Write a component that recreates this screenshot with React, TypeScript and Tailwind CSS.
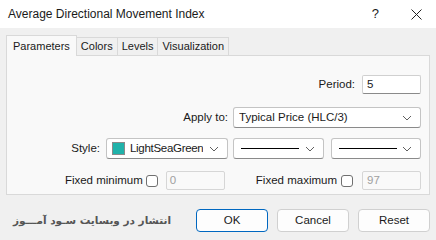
import React from "react";

const Chevron = () => (
  <svg width="10" height="6" viewBox="0 0 10 6" className="shrink-0">
    <path d="M1 1 L5 5 L9 1" fill="none" stroke="#606060" strokeWidth="1" />
  </svg>
);

const Select = ({ className, children }: { className: string; children: React.ReactNode }) => (
  <div
    className={`flex items-center justify-between h-[21px] bg-white border border-[#c4c4c4] border-b-[#8a8a8a] rounded-[3px] pl-[5px] pr-[8px] ${className}`}
  >
    <div className="flex items-center gap-[5px] min-w-0 whitespace-nowrap overflow-hidden">{children}</div>
    <Chevron />
  </div>
);

const Checkbox = () => (
  <div className="w-[12px] h-[12px] border border-[#707070] rounded-[3px] bg-white shrink-0" />
);

const App = () => {
  const tabs = ["Parameters", "Colors", "Levels", "Visualization"];

  return (
    <div
      className="w-[436px] h-[240px] bg-[#f0f0f0] text-[11.5px] text-[#1a1a1a] flex flex-col overflow-hidden"
      style={{ fontFamily: '"Liberation Sans", Arial, sans-serif' }}
    >
      {/* title bar */}
      <div className="h-[28px] bg-white flex items-center justify-between pl-[8px] pr-[14px] shrink-0">
        <span className="text-[12px]">Average Directional Movement Index</span>
        <div className="flex items-center gap-[32px]">
          <span className="text-[13px]">?</span>
          <svg width="11" height="11" viewBox="0 0 11 11">
            <path d="M0.5 0.5 L10.5 10.5 M10.5 0.5 L0.5 10.5" stroke="#222" strokeWidth="1" />
          </svg>
        </div>
      </div>

      {/* tabs */}
      <div className="px-[6px] pt-[7px] flex flex-col">
        <div className="flex items-end h-[20px] text-[11px]">
          {tabs.map((t, i) => (
            <div
              key={t}
              className={
                i === 0
                  ? "h-[21px] px-[6px] flex items-center bg-[#f9f9f9] border border-[#d9d9d9] border-b-0 relative z-10 -mb-px"
                  : "h-[18px] px-[4px] flex items-center bg-[#f0f0f0] border border-[#d9d9d9] border-l-0 border-b-0"
              }
            >
              {t}
            </div>
          ))}
        </div>
        <div className="h-[140px] bg-[#f9f9f9] border border-[#d9d9d9] flex flex-col pr-[8px]">
          <div className="flex items-center justify-end gap-[7px] mt-[19px]">
            <span>Period:</span>
            <div className="w-[59px] h-[19px] bg-white border border-[#d0d0d0] border-b-[#8a8a8a] rounded-[2px] px-[4px] flex items-center">
              5
            </div>
          </div>
          <div className="flex items-center justify-end gap-[5px] mt-[13px]">
            <span>Apply to:</span>
            <Select className="w-[188px]">
              <span>Typical Price (HLC/3)</span>
            </Select>
          </div>
          <div className="flex items-center justify-end mt-[10px]">
            <span className="mr-[6px]">Style:</span>
            <Select className="w-[122px] mr-[5px]">
              <div className="w-[13px] h-[13px] bg-[#20b2aa] border border-[#8a8a8a] shrink-0" />
              <span className="tracking-[-0.3px]">LightSeaGreen</span>
            </Select>
            <Select className="w-[91px] mr-[7px]">
              <div className="w-[58px] h-px bg-black ml-[2px]" />
            </Select>
            <Select className="w-[90px]">
              <div className="w-[58px] h-px bg-black ml-[2px]" />
            </Select>
          </div>
          <div className="flex items-center justify-end mt-[12px]">
            <span className="mr-[3px]">Fixed minimum</span>
            <Checkbox />
            <div className="w-[59px] h-[19px] ml-[8px] border border-[#d6d6d6] rounded-[2px] px-[3px] flex items-center text-[#a0a0a0]">
              0
            </div>
            <span className="ml-[31px] mr-[4px]">Fixed maximum</span>
            <Checkbox />
            <div className="w-[59px] h-[19px] ml-[9px] border border-[#d6d6d6] rounded-[2px] px-[4px] flex items-center text-[#a0a0a0]">
              97
            </div>
          </div>
        </div>
      </div>

      {/* bottom */}
      <div className="flex items-center mt-[14px] pl-[13px] pr-[6px]">
        <span
          dir="rtl"
          className="text-[10.5px] font-bold text-[#555555] whitespace-nowrap"
          style={{ fontFamily: '"DejaVu Sans", sans-serif' }}
        >
          انتشار در وبسایت سـود آمـــوز
        </span>
        <div className="ml-auto flex gap-[9px]">
          <button className="w-[72px] h-[23px] bg-[#fdfdfd] border border-[#0067c0] rounded-[4px]">OK</button>
          <button className="w-[72px] h-[23px] bg-[#fdfdfd] border border-[#d0d0d0] rounded-[4px]">Cancel</button>
          <button className="w-[72px] h-[23px] bg-[#fdfdfd] border border-[#d0d0d0] rounded-[4px]">Reset</button>
        </div>
      </div>
    </div>
  );
};

export default App;
